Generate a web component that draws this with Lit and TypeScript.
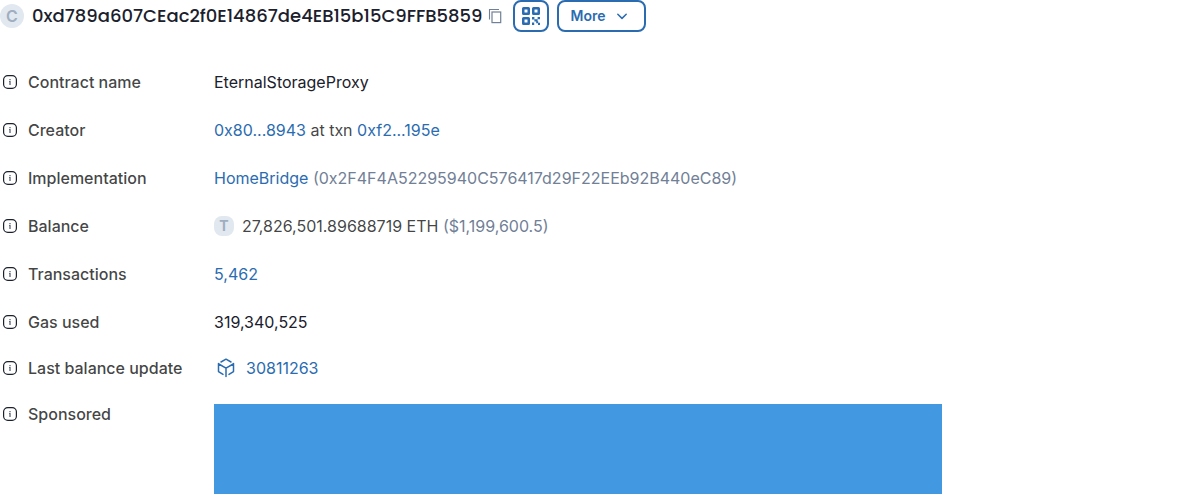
import { LitElement, html, css, svg, type TemplateResult } from "lit";
import { customElement, property } from "lit/decorators.js";

const infoIcon = html`<svg viewBox="0 0 20 20" width="20" height="20" fill="none" aria-hidden="true">
  <rect x="3.6" y="3.6" width="12.8" height="12.8" rx="4.2" stroke="#1a202c" stroke-width="1.2" />
  <path d="M9.4 7h1.2v1.2H9.4zM9 9h1.6v4H9.4V9.8H9z" fill="#4a5568" />
</svg>`;

const copyIcon = html`<svg viewBox="0 0 20 20" width="20" height="20" fill="none" aria-hidden="true">
  <path d="M4.5 13.5v-10h9.5" stroke="#718096" stroke-width="1.1" />
  <rect x="7" y="6" width="8.7" height="10.6" stroke="#718096" stroke-width="1.2" />
</svg>`;

const finder = (x: number, y: number) => svg`<rect x=${x + 1.25} y=${y + 1.25} width="5.5" height="5.5" rx="0.3" stroke="currentColor" stroke-width="2.5" fill="none" />`;

const qrIcon = html`<svg viewBox="0 0 18 18" width="18" height="18" aria-hidden="true">
  ${finder(0, 0)}${finder(10, 0)}${finder(0, 10)}
  <path
    d="M10 10h2.4v2.4H10zM15.6 10H18v2.2h-2.4zM12.4 12.2h3.2v2.2h-3.2zM10 15.6h2.2V18H10zM14.2 14.2h2v2h-2zM16 15.8h2V18h-2z"
    fill="currentColor"
  />
</svg>`;

const chevronIcon = html`<svg viewBox="0 0 20 20" width="20" height="20" fill="none" aria-hidden="true">
  <path d="M5.8 8.2 10 12.4l4.2-4.2" stroke="currentColor" stroke-width="1.5" stroke-linecap="round" stroke-linejoin="round" />
</svg>`;

const blockIcon = html`<svg viewBox="0 0 24 24" width="24" height="24" fill="none" aria-hidden="true">
  <path
    d="m7 6 5-2.8L17 6M19.5 7.6v8L15 18.4M9 18.4l-4.5-2.8v-8M4.8 8l7.2 4.1L19.2 8M12 12.1v8.3"
    stroke="currentColor" stroke-width="1.5" stroke-linejoin="round" stroke-linecap="round"
  />
</svg>`;

@customElement("detail-row")
class DetailRow extends LitElement {
  @property() label = "";
  @property({ type: Boolean, reflect: true }) compact = false;

  static styles = css`
    :host {
      display: grid;
      grid-template-columns: 206px minmax(0, 1fr);
      column-gap: 8px;
      align-items: start;
      line-height: 24px;
    }
    :host([compact]) {
      line-height: 20px;
      min-height: 22px;
    }
    .term {
      display: flex;
      align-items: center;
      gap: 8px;
      font-weight: 500;
    }
    .term svg {
      flex: none;
    }
    .value {
      min-width: 0;
    }
  `;

  render() {
    return html`
      <div class="term">${infoIcon}<span>${this.label}</span></div>
      <div class="value"><slot></slot></div>
    `;
  }
}

@customElement("app-root")
class AppRoot extends LitElement {
  static styles = css`
    :host {
      display: block;
      font-family: Inter, sans-serif;
      font-size: 16px;
      line-height: 24px;
      color: rgba(16, 17, 18, 0.8);
      background: #fff;
    }
    header {
      display: flex;
      align-items: center;
      flex-wrap: wrap;
      gap: 8px;
      margin-bottom: 38px;
    }
    h1 {
      margin: 0;
      font-family: Poppins, Inter, sans-serif;
      font-size: 18px;
      font-weight: 500;
      line-height: 32px;
      color: #1a202c;
      overflow-wrap: anywhere;
    }
    .badge {
      display: flex;
      align-items: center;
      justify-content: center;
      flex: none;
      background: #e2e8f0;
      color: #a0aec0;
      font-weight: 600;
    }
    .avatar {
      width: 24px;
      height: 24px;
      border-radius: 50%;
    }
    .token {
      width: 20px;
      height: 20px;
      border-radius: 8px;
      font-size: 14px;
      font-weight: 700;
    }
    button {
      display: flex;
      align-items: center;
      justify-content: center;
      box-sizing: border-box;
      margin: 0;
      padding: 0;
      border: 0;
      background: none;
      color: #2b6cb0;
      font: 600 14px/20px Inter, sans-serif;
      cursor: pointer;
    }
    .copy {
      width: 20px;
      height: 20px;
      margin-left: -6px;
    }
    .outline {
      height: 32px;
      border: 2px solid #2b6cb0;
      border-radius: 8px;
    }
    .qr {
      width: 36px;
    }
    .more {
      gap: 6px;
      padding: 0 12px;
    }
    .details {
      display: grid;
      row-gap: 24px;
    }
    a {
      color: #2b6cb0;
      text-decoration: none;
    }
    .strong {
      color: #1a202c;
    }
    .muted {
      color: #718096;
      overflow-wrap: anywhere;
    }
    .inline {
      display: flex;
      align-items: center;
      gap: 8px;
    }
    .block {
      height: 20px;
    }
    .ad {
      max-width: 728px;
      height: 90px;
      background: #4299e1;
    }
  `;

  private row(label: string, value: TemplateResult, compact = false) {
    return html`<detail-row label=${label} ?compact=${compact}>${value}</detail-row>`;
  }

  render() {
    return html`
      <header>
        <span class="badge avatar">C</span>
        <h1>0xd789a607CEac2f0E14867de4EB15b15C9FFB5859</h1>
        <button class="copy" aria-label="Copy address">${copyIcon}</button>
        <button class="outline qr" aria-label="Show QR code">${qrIcon}</button>
        <button class="outline more" aria-haspopup="menu">More ${chevronIcon}</button>
      </header>
      <main class="details">
        ${this.row("Contract name", html`<span class="strong">EternalStorageProxy</span>`)}
        ${this.row("Creator", html`<a href="#creator">0x80...8943</a> at txn <a href="#txn">0xf2...195e</a>`)}
        ${this.row(
          "Implementation",
          html`<a href="#implementation">HomeBridge</a>
            <span class="muted">(0x2F4F4A52295940C576417d29F22EEb92B440eC89)</span>`,
        )}
        ${this.row(
          "Balance",
          html`<div class="inline">
            <span class="badge token">T</span>
            <span>27,826,501.89688719 ETH <span class="muted">($1,199,600.5)</span></span>
          </div>`,
        )}
        ${this.row("Transactions", html`<a href="#transactions">5,462</a>`)}
        ${this.row("Gas used", html`<span class="strong">319,340,525</span>`)}
        ${this.row("Last balance update", html`<a class="inline block" href="#block">${blockIcon}30811263</a>`, true)}
        ${this.row("Sponsored", html`<div class="ad"></div>`, true)}
      </main>
    `;
  }
}
